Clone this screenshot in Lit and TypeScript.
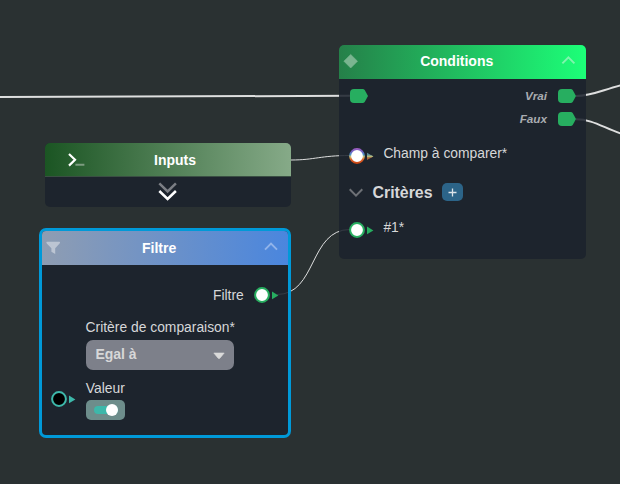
import { LitElement, html, svg, css } from "lit";
import { customElement, property } from "lit/decorators.js";

@customElement("flow-port")
class FlowPort extends LitElement {
  @property() ring = "#27ae60";
  @property() fill = "#ffffff";
  @property({ type: Boolean }) rainbow = false;

  static styles = css`
    :host { display: block; width: 26px; height: 18px; }
    svg { display: block; }
  `;

  render() {
    const paint = this.rainbow ? "url(#spectrum)" : this.ring;
    return html`<svg width="26" height="18" viewBox="0 0 26 18">
      <defs>
        <linearGradient id="spectrum" gradientUnits="userSpaceOnUse" x1="0" y1="1" x2="0" y2="17">
          <stop offset="0" stop-color="#a55bc0" />
          <stop offset=".25" stop-color="#6a62c4" />
          <stop offset=".42" stop-color="#4a9ac8" />
          <stop offset=".55" stop-color="#d8c070" />
          <stop offset=".72" stop-color="#d9602a" />
          <stop offset="1" stop-color="#c8400c" />
        </linearGradient>
      </defs>
      <circle cx="9" cy="9" r="6.9" fill=${this.fill} stroke=${paint} stroke-width="2" />
      ${this.rainbow
        ? svg`<path d="M19 5.8L25.4 9.4H19z" fill="#5a8a98" /><path d="M19 9.4H25.4L19 13z" fill="#a8603c" /><path d="M19 8.4H23.8L25.4 9.4 23.8 10.3H19z" fill="#b3b779" />`
        : svg`<path d="M19 5.6L25.4 9.4 19 13.2z" fill=${this.ring} />`}
    </svg>`;
  }
}

@customElement("exec-port")
class ExecPort extends LitElement {
  static styles = css`
    :host { display: block; width: 19px; height: 14px; }
    svg { display: block; }
  `;

  render() {
    return html`<svg width="19" height="14" viewBox="0 0 19 14">
      <path d="M4 0H12.7a2.4 2.4 0 0 1 2 1.1L18 7 14.7 12.9a2.4 2.4 0 0 1-2 1.1H4A4 4 0 0 1 0 10V4A4 4 0 0 1 4 0z" fill="#27ae60" />
    </svg>`;
  }
}

@customElement("app-root")
class AppRoot extends LitElement {
  static styles = css`
    :host {
      display: block;
      position: relative;
      width: 620px;
      height: 484px;
      overflow: hidden;
      background: #2a3132;
      color: #d6d7d9;
      font: 13.85px/16px "Liberation Sans", Arial, sans-serif;
    }
    * { box-sizing: border-box; }
    svg { display: block; }
    .wires { position: absolute; inset: 0; fill: none; stroke: #dedfdf; }
    .node {
      position: absolute;
      display: flex;
      flex-direction: column;
      border-radius: 5px;
      background: rgba(28, 34, 45, 0.87);
      overflow: hidden;
    }
    .conditions { left: 339.4px; top: 44.6px; width: 246.6px; height: 214.8px; }
    .inputs { left: 44.6px; top: 143px; width: 246.6px; height: 64px; }
    .filter { left: 38.6px; top: 228.2px; width: 252.6px; height: 209.8px; border: 3px solid #0099d8; border-radius: 7px; background-clip: padding-box; }
    .head {
      position: relative;
      flex: none;
      display: flex;
      align-items: center;
      justify-content: center;
      height: 34.3px;
      color: #fff;
      font-size: 14px;
      font-weight: bold;
    }
    .head svg { position: absolute; left: 0; top: 0; }
    .conditions .head { background: linear-gradient(90deg, #258049, #1cff78); padding: 0 12px 2px 0; }
    .inputs .head { background: linear-gradient(90deg, #1b5523, #86aa88); padding: 1px 0 0 14.4px; border-bottom: 1px solid #3a4f43; }
    .filter .head { background: linear-gradient(90deg, #8f9db2, #4a86de); }
    .filter .title { margin-right: 11.5px; }
    .row { display: flex; align-items: center; flex: none; }
    .row.exec { height: 23px; padding: 0 9.2px 0 10.4px; }
    .exec-in { margin-right: auto; }
    .exec-label { font: italic bold 11.7px/14px "Liberation Sans", Arial, sans-serif; color: #a9acb1; margin-right: 10.8px; }
    .outs { padding-top: 6px; }
    .param { height: 24px; padding-left: 8.8px; gap: 9.2px; align-items: flex-start; }
    .param flow-port { margin-top: 2.2px; }
    .first { margin-top: 13.8px; }
    .second { margin-top: 16.3px; }
    .second flow-port { margin-top: 1.6px; }
    .group { height: 20px; margin-top: 14.3px; padding-left: 9.8px; }
    .group-title { font-size: 15.9px; line-height: 20px; font-weight: bold; margin-left: 9.3px; }
    .add { display: flex; align-items: center; justify-content: center; width: 21px; height: 18px; margin-left: 9.8px; margin-bottom: 1px; border-radius: 5px; background: #2c6488; }
    .more { align-self: center; }
    .out { height: 18px; margin-top: 20.7px; justify-content: flex-end; padding-right: 9.4px; gap: 9.1px; }
    .label { margin-left: 44px; flex: none; }
    .crit { margin-top: 15px; }
    .select {
      flex: none;
      display: flex;
      align-items: center;
      justify-content: space-between;
      width: 148.4px;
      height: 30px;
      margin: 5px 0 0 44px;
      padding: 0 9px 2px 9.8px;
      border-radius: 7px;
      background: #7d808a;
      color: #d7d7d8;
      font-size: 14px;
      font-weight: bold;
    }
    .select svg { margin-top: 2px; }
    .value { align-items: flex-start; padding-left: 9px; margin-top: 10px; }
    .value flow-port { margin: 10.2px 9.4px 0 -.2px; }
    .toggle { display: flex; align-items: center; width: 39.5px; height: 20px; margin-top: 4px; padding-left: 7.8px; border-radius: 5px; background: #6d8d8b; }
    .track { width: 24px; height: 8px; border-radius: 4px; background: #3db8aa; display: flex; align-items: center; justify-content: flex-end; }
    .knob { width: 12px; height: 12px; border-radius: 50%; background: #fff; }
  `;

  render() {
    return html`
      <svg class="wires" width="620" height="484" viewBox="0 0 620 484">
        <path d="M0 97L350 95.8" stroke-width="2" />
        <path d="M576 96C592 96 602 90 622 85" stroke-width="2" />
        <path d="M576 119.3C592 119.3 602 127 622 134" stroke-width="2" />
        <path d="M291 160C315 160 320 155.5 350 155.5" />
        <path d="M277 294.5C317 294.5 309 229.5 350 229.5" />
      </svg>

      <section class="node conditions">
        <header class="head">
          <svg width="246" height="34" viewBox="0 0 246 34">
            <path d="M11.7 9.4L18.5 16.2 11.7 23 4.9 16.2z" fill="#7ab590" stroke="#7ab590" stroke-width=".6" stroke-linejoin="round" />
            <path d="M223.4 18.4L229.4 12.3 235.4 18.4" fill="none" stroke="#80f5ae" stroke-width="1.9" />
          </svg>
          <span>Conditions</span>
        </header>
        <div class="outs">
          <div class="row exec">
            <exec-port class="exec-in"></exec-port>
            <span class="exec-label">Vrai</span><exec-port></exec-port>
          </div>
          <div class="row exec">
            <span class="exec-in"></span>
            <span class="exec-label">Faux</span><exec-port></exec-port>
          </div>
        </div>
        <div class="row param first">
          <flow-port rainbow></flow-port><span>Champ à comparer*</span>
        </div>
        <div class="row group">
          <svg width="14" height="9" viewBox="0 0 14 9"><path d="M.7 1.2L7 7.6 13.3 1.2" fill="none" stroke="#6d7075" stroke-width="2" /></svg>
          <span class="group-title">Critères</span>
          <span class="add"><svg width="9" height="9" viewBox="0 0 9 9"><path d="M4.5 .5V8.5M.5 4.5H8.5" stroke="#dce4e9" stroke-width="1.3" /></svg></span>
        </div>
        <div class="row param second">
          <flow-port></flow-port><span>#1*</span>
        </div>
      </section>

      <section class="node inputs">
        <header class="head">
          <svg width="46" height="34" viewBox="0 0 46 34">
            <path d="M24 11L30 16.8 24 22.6" fill="none" stroke="#fff" stroke-width="2.2" />
            <path d="M30.4 21.7H39.4" stroke="#7d9c80" stroke-width="2" />
          </svg>
          <span>Inputs</span>
        </header>
        <svg class="more" width="20" height="24" viewBox="0 0 20 24">
          <g fill="none" stroke-width="2.5">
            <path d="M1.3 6.4L9.6 14.4 17.9 6.4" stroke="#7b7e84" />
            <path d="M1.3 14L9.6 22 17.9 14" stroke="#fff" />
          </g>
        </svg>
      </section>

      <section class="node filter">
        <header class="head">
          <svg width="246" height="34" viewBox="0 0 246 34">
            <path d="M4.8 10.8H17.6Q18.6 11.6 17.6 12.6L13.2 17.2V23L9.4 20.8V17.2L4.8 12.6Q3.8 11.6 4.8 10.8z" fill="#bcc5d3" />
            <path d="M223 18.6L229 12.5 235 18.6" fill="none" stroke="#91b4ea" stroke-width="1.9" />
          </svg>
          <span class="title">Filtre</span>
        </header>
        <div class="row out"><span>Filtre</span><flow-port></flow-port></div>
        <span class="label crit">Critère de comparaison*</span>
        <div class="select">
          <span>Egal à</span>
          <svg width="12" height="7" viewBox="0 0 12 7"><path d="M.8 1H11.2L6.9 6.2Q6 7 5.1 6.2z" fill="#dadada" stroke="#dadada" stroke-width=".6" stroke-linejoin="round" /></svg>
        </div>
        <div class="row value">
          <flow-port ring="#3db8aa" fill="#000"></flow-port>
          <div>
            <div>Valeur</div>
            <div class="toggle"><span class="track"><span class="knob"></span></span></div>
          </div>
        </div>
      </section>
    `;
  }
}
